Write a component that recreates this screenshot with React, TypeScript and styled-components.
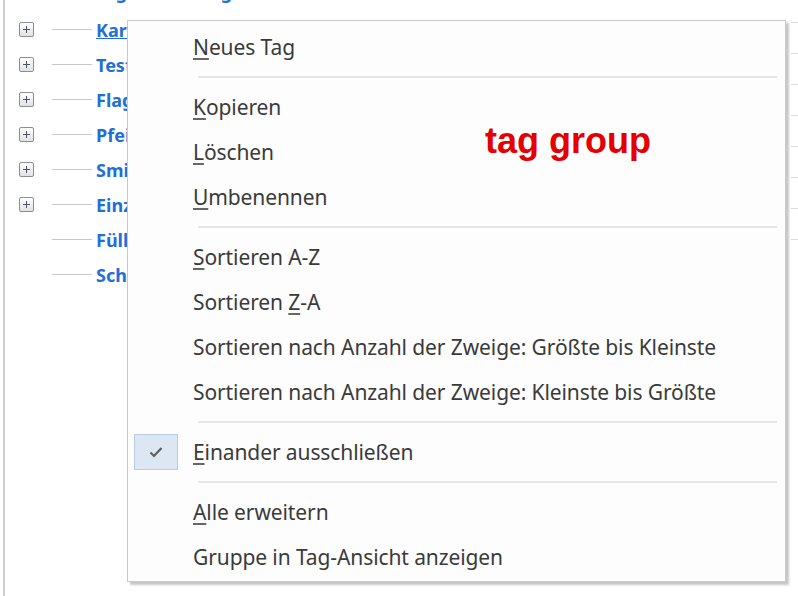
import * as React from 'react';
import styled, { createGlobalStyle } from 'styled-components';

const GlobalStyle = createGlobalStyle`
  html, body {
    margin: 0;
    padding: 0;
    background: #ffffff;
    overflow: hidden;
  }
`;

const Screen = styled.div`
  position: relative;
  width: 798px;
  height: 596px;
  display: flex;
  overflow: hidden;
  background: #ffffff;
`;

const TreePane = styled.div`
  flex: 1;
  margin-left: 3px;
  border-left: 2px solid #cfcfcf;
  display: flex;
  flex-direction: column;
`;

const TreeRow = styled.div<{ $offset?: number; $height?: number }>`
  height: ${p => p.$height ?? 35}px;
  display: flex;
  align-items: center;
  margin-top: ${p => p.$offset ?? 0}px;
  flex-shrink: 0;
`;

const ToggleCell = styled.div`
  width: 47px;
  display: flex;
  align-items: center;
  padding-left: 14px;
  box-sizing: border-box;
`;

const PlusBox = styled.div`
  width: 15px;
  height: 15px;
  box-sizing: border-box;
  border: 1px solid #8e8e8e;
  border-radius: 2px;
  background: linear-gradient(#ffffff, #e2e2e2);
  position: relative;

  &::before,
  &::after {
    content: '';
    position: absolute;
    background: #46546a;
  }
  &::before {
    left: 3px;
    right: 3px;
    top: 6px;
    height: 1px;
  }
  &::after {
    top: 3px;
    bottom: 3px;
    left: 6px;
    width: 1px;
  }
`;

const Connector = styled.div<{ $hidden?: boolean }>`
  width: 40px;
  height: 1px;
  background: ${p => (p.$hidden ? 'transparent' : '#c8c8c8')};
  margin-right: 4px;
`;

const TreeLabel = styled.span<{ $underline?: boolean }>`
  font-family: 'Noto Sans', 'Open Sans', sans-serif;
  font-weight: 700;
  font-size: 18px;
  color: #1f6fd6;
  text-decoration: ${p => (p.$underline ? 'underline' : 'none')};
  white-space: nowrap;
`;

const SidePanel = styled.div`
  width: 7px;
  margin-top: -8px;
  display: flex;
  flex-direction: column;
`;

const SideRow = styled.div`
  height: 30px;
  border-bottom: 1px solid #dcdcdc;
  flex-shrink: 0;
`;

const Menu = styled.div`
  position: absolute;
  left: 127px;
  top: 20px;
  width: 657px;
  padding: 3px 0 2px;
  background: #fdfdfd;
  border: 1px solid #c9c9c9;
  box-shadow: 3px 3px 2px rgba(0, 0, 0, 0.22);
  font-family: 'Noto Sans', 'Open Sans', sans-serif;
  font-size: 21px;
  color: #3a3a3a;
`;

const Item = styled.div`
  height: 45px;
  display: flex;
  align-items: center;
`;

const IconCell = styled.div`
  width: 65px;
  height: 100%;
  display: flex;
  align-items: center;
  padding-left: 6px;
  box-sizing: border-box;
`;

const CheckBox = styled.div`
  width: 44px;
  height: 36px;
  box-sizing: border-box;
  background: #dde7f4;
  border: 1px solid #b9cde6;
  display: flex;
  align-items: center;
  justify-content: center;
`;

const Label = styled.span`
  white-space: nowrap;
  letter-spacing: -0.1px;

  u {
    text-decoration-color: #666;
    text-underline-offset: 3px;
  }
`;

const Separator = styled.div`
  height: 15px;
  display: flex;
  align-items: center;
  margin: 0 8px 0 70px;

  &::after {
    content: '';
    flex: 1;
    height: 2px;
    background: #e6e6e6;
  }
`;

const Annotation = styled.div`
  position: absolute;
  left: 485px;
  top: 120px;
  font-family: 'Liberation Sans', Arial, sans-serif;
  font-weight: 700;
  font-size: 36px;
  color: #e40000;
  white-space: nowrap;
`;

type Entry =
  | { kind: 'sep' }
  | { kind: 'item'; pre: string; key: string; post: string; checked?: boolean };

const item = (pre: string, key: string, post: string, checked = false): Entry => ({
  kind: 'item',
  pre,
  key,
  post,
  checked,
});

const entries: Entry[] = [
  item('', 'N', 'eues Tag'),
  { kind: 'sep' },
  item('', 'K', 'opieren'),
  item('', 'L', 'öschen'),
  item('', 'U', 'mbenennen'),
  { kind: 'sep' },
  item('', 'S', 'ortieren A-Z'),
  item('Sortieren ', 'Z', '-A'),
  item('Sortieren nach Anzahl der Zweige: Größte bis Kleinste', '', ''),
  item('Sortieren nach Anzahl der Zweige: Kleinste bis Größte', '', ''),
  { kind: 'sep' },
  item('', 'E', 'inander ausschließen', true),
  { kind: 'sep' },
  item('', 'A', 'lle erweitern'),
  item('Gruppe in Tag-Ansicht anzeigen', '', ''),
];

const treeItems = [
  { name: 'Karten', plus: true },
  { name: 'Test', plus: true },
  { name: 'Flaggen', plus: true },
  { name: 'Pfeile', plus: true },
  { name: 'Smileys', plus: true },
  { name: 'Einzelne', plus: true },
  { name: 'Füllung', plus: false },
  { name: 'Schrift', plus: false },
];

const Check = () => (
  <svg width="14" height="12" viewBox="0 0 14 12">
    <path d="M1.5 6.5 L5 10 L12.5 2" fill="none" stroke="#5f5f5f" strokeWidth="2.2" />
  </svg>
);

const App = () => (
  <Screen>
    <GlobalStyle />
    <TreePane>
      {/* parent group, scrolled mostly out of view */}
      <TreeRow $offset={-28} $height={40}>
        <ToggleCell />
        <Connector $hidden />
        <TreeLabel>Tag Einstellung</TreeLabel>
      </TreeRow>
      {treeItems.map((t, i) => (
        <TreeRow key={t.name}>
          <ToggleCell>{t.plus && <PlusBox />}</ToggleCell>
          <Connector />
          <TreeLabel $underline={i === 0}>{t.name}</TreeLabel>
        </TreeRow>
      ))}
    </TreePane>
    <SidePanel>
      {Array.from({ length: 8 }).map((_, i) => (
        <SideRow key={i} />
      ))}
    </SidePanel>

    <Menu>
      {entries.map((e, i) =>
        e.kind === 'sep' ? (
          <Separator key={i} />
        ) : (
          <Item key={i}>
            <IconCell>
              {e.checked && (
                <CheckBox>
                  <Check />
                </CheckBox>
              )}
            </IconCell>
            <Label>
              {e.pre}
              {e.key && <u>{e.key}</u>}
              {e.post}
            </Label>
          </Item>
        )
      )}
    </Menu>
    <Annotation>tag group</Annotation>
  </Screen>
);

export default App;
